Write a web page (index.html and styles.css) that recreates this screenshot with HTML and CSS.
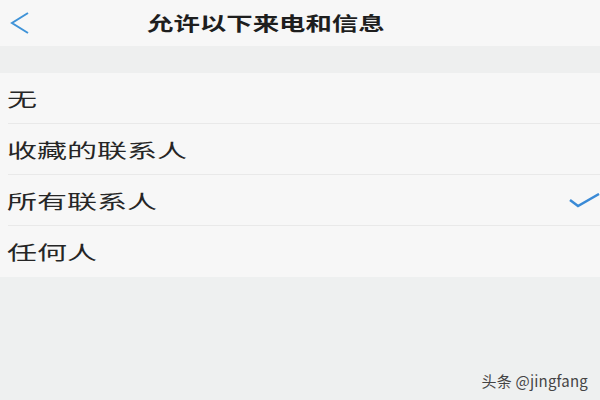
FILE: index.html
```html
<!DOCTYPE html>
<html lang="zh">
<head>
    <meta charset="UTF-8">
    <title>允许以下来电和信息</title>
    <link rel="stylesheet" href="styles.css">
</head>
<body>
    <div class="page">
        <div class="topbar">
            <svg class="back" width="22" height="24" viewBox="0 0 22 24">
                <path d="M19 2 L3 12 L19 22" fill="none" stroke="#3f93d8" stroke-width="2"/>
            </svg>
            <span class="title">允许以下来电和信息</span>
        </div>
        <div class="gap"></div>
        <ul class="list">
            <li class="row"><span class="label">无</span></li>
            <li class="row"><span class="label">收藏的联系人</span></li>
            <li class="row">
                <span class="label">所有联系人</span>
                <svg class="check" width="32" height="16" viewBox="0 0 32 16">
                    <path d="M2 7 L10 13 L31 1" fill="none" stroke="#3a8ad6" stroke-width="2.5"/>
                </svg>
            </li>
            <li class="row"><span class="label">任何人</span></li>
        </ul>
        <div class="footer">
            <span class="mark">头条 @jingfang</span>
        </div>
    </div>
</body>
</html>
```

FILE: styles.css
```css
* {
    margin: 0;
    padding: 0;
    box-sizing: border-box;
}
body {
    background-color: #eef0f0;
    font-family: "Noto Sans CJK SC", "Noto Sans", sans-serif;
    color: #222;
    width: 600px;
    height: 400px;
    overflow: hidden;
}
.topbar {
    height: 46px;
    background: #f7f7f7;
    display: flex;
    align-items: center;
    padding-left: 9px;
}
.back {
    display: block;
    margin-top: -1px;
}
.title {
    display: inline-block;
    margin-left: 116px;
    font-size: 19px;
    font-weight: bold;
    color: #1e1e1e;
    transform: scaleX(1.39);
    transform-origin: left center;
    margin-top: -1px;
}
.gap {
    height: 27px;
    background: #eeefef;
}
.list {
    list-style: none;
    background: #f7f7f7;
}
.row {
    height: 51px;
    display: flex;
    align-items: center;
    justify-content: space-between;
    border-bottom: 1px solid #e9e9e9;
    margin-left: 8px;
}
.row:last-child {
    border-bottom: none;
}
.label {
    display: inline-block;
    margin-left: -1px;
    font-size: 19px;
    color: #262626;
    transform: scaleX(1.58);
    transform-origin: left center;
}
.check {
    display: block;
    margin-top: 2px;
}
.footer {
    height: 124px;
    display: flex;
    align-items: flex-end;
    justify-content: flex-end;
    padding: 0 12px 10px 0;
}
.mark {
    font-size: 15px;
    color: #444;
    letter-spacing: 0.2px;
}
```
